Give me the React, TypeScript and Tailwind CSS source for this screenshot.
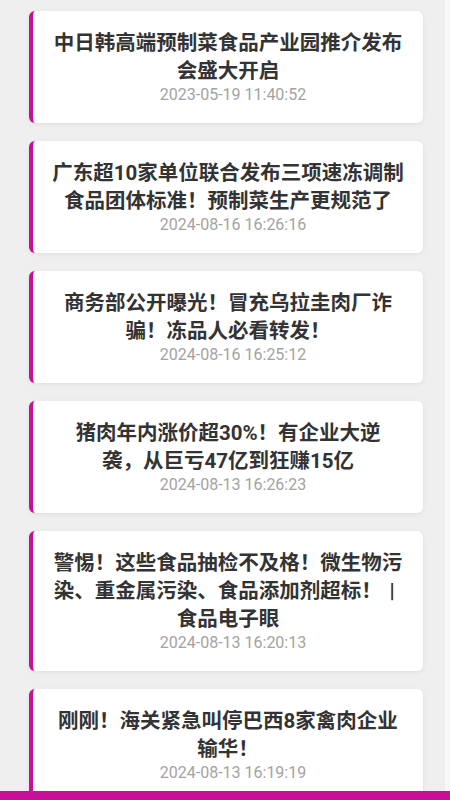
const news = [
  { lines: ["中日韩高端预制菜食品产业园推介发布", "会盛大开启"], time: "2023-05-19 11:40:52" },
  { lines: ["广东超10家单位联合发布三项速冻调制", "食品团体标准！预制菜生产更规范了"], time: "2024-08-16 16:26:16" },
  { lines: ["商务部公开曝光！冒充乌拉圭肉厂诈", "骗！冻品人必看转发！"], time: "2024-08-16 16:25:12" },
  { lines: ["猪肉年内涨价超30%！有企业大逆", "袭，从巨亏47亿到狂赚15亿"], time: "2024-08-13 16:26:23" },
  { lines: ["警惕！这些食品抽检不及格！微生物污", "染、重金属污染、食品添加剂超标！|", "食品电子眼"], time: "2024-08-13 16:20:13" },
  { lines: ["刚刚！海关紧急叫停巴西8家禽肉企业", "输华！"], time: "2024-08-13 16:19:19" },
]

export default function App() {
  return (
    <div
      className="h-[800px] w-full flex flex-col overflow-hidden bg-[#efefef]"
      style={{ fontFamily: '"Roboto", "Noto Sans CJK SC", sans-serif' }}
    >
      <div className="flex flex-1 min-h-0 overflow-hidden">
        {/* list */}
        <div className="w-[445px] shrink-0 pt-[11px] flex flex-col gap-[18px]">
          {news.map((n, i) => (
            <div
              key={i}
              className="ml-[29px] w-[394px] shrink-0 bg-white rounded-md border-l-4 border-[#c90f97] shadow-[0_1px_4px_rgba(0,0,0,0.08)] px-[12px] py-[18px] text-center"
            >
              <div className="text-[20.5px] leading-[28px] font-bold text-[#333333] whitespace-nowrap">
                {n.lines.map((l, j) => (
                  <div key={j}>
                    {l.endsWith("|") ? (
                      <>
                        {l.slice(0, -1)}
                        <span className="inline-block w-[20.5px] text-center">|</span>
                      </>
                    ) : (
                      l
                    )}
                  </div>
                ))}
              </div>
              <div className="pl-[10px] text-[16px] leading-[20px] text-[#a3a3a3]">{n.time}</div>
            </div>
          ))}
        </div>
        {/* right edge */}
        <div className="flex-1 bg-[#f8f8f8]"></div>
      </div>

      {/* bottom bar */}
      <div className="h-[9px] shrink-0 bg-[#c90f97]"></div>
    </div>
  )
}
